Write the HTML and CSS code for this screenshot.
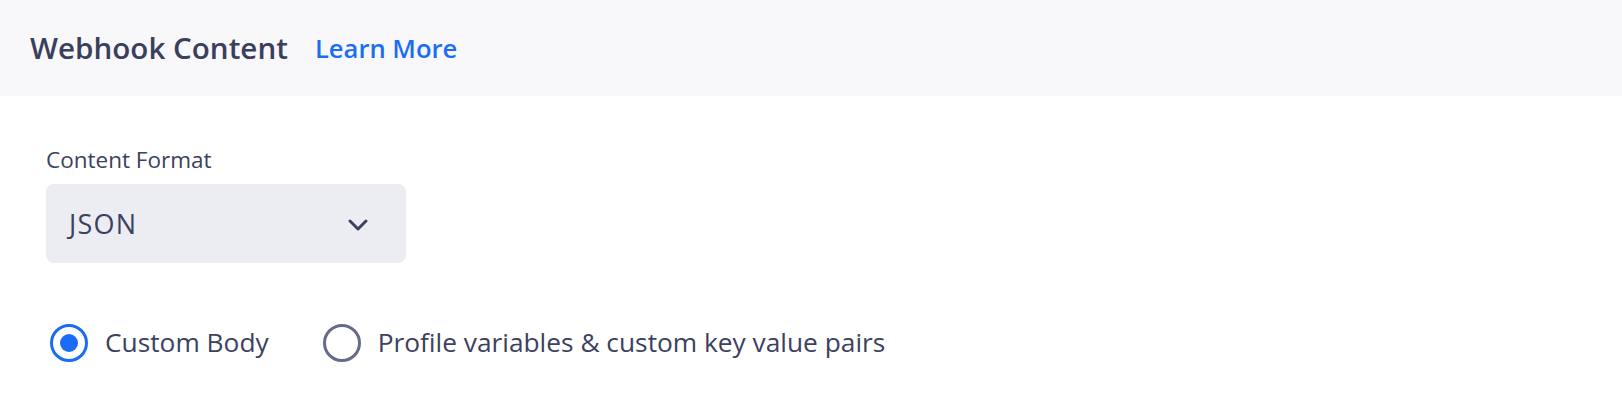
FILE: index.html
```html
<!DOCTYPE html>
<html lang="en">
<head>
<meta charset="utf-8">
<title>Webhook Content</title>
<link rel="stylesheet" href="styles.css">
</head>
<body>
  <header class="panel-header">
    <h2 class="panel-title">Webhook Content</h2>
    <a class="learn-more" href="#">Learn More</a>
  </header>
  <main class="panel-body">
    <label class="field-label">Content Format</label>
    <div class="select">
      <span class="select-value">JSON</span>
      <svg class="chevron" width="20" height="13" viewBox="0 0 20 13" aria-hidden="true">
        <path d="M2 2 L10 10 L18 2" fill="none" stroke="#3c4160" stroke-width="3" stroke-linecap="round" stroke-linejoin="round"/>
      </svg>
    </div>
    <div class="radio-group">
      <label class="radio-option">
        <span class="radio checked"><span class="radio-dot"></span></span>
        <span class="radio-text">Custom Body</span>
      </label>
      <label class="radio-option">
        <span class="radio"></span>
        <span class="radio-text">Profile variables &amp; custom key value pairs</span>
      </label>
    </div>
  </main>
</body>
</html>
```
FILE: styles.css
```css
html, body {
  margin: 0;
  padding: 0;
  background: #ffffff;
}

body {
  width: 1622px;
  height: 410px;
  font-family: "Open Sans", "Liberation Sans", sans-serif;
  color: #3c4160;
  overflow: hidden;
}

.panel-header {
  height: 96px;
  box-sizing: border-box;
  background: #f8f8fa;
  display: flex;
  align-items: center;
  padding-left: 30px;
  gap: 27px;
}

.panel-title {
  margin: 0;
  font-size: 29.6px;
  font-weight: 600;
  color: #3a3f5c;
  line-height: 1;
}

.learn-more {
  font-size: 25.6px;
  font-weight: 600;
  color: #1b6ef3;
  text-decoration: none;
  line-height: 1;
  margin-top: 1px;
}

.panel-body {
  padding-left: 46px;
  padding-top: 49px;
  display: flex;
  flex-direction: column;
  align-items: flex-start;
}

.field-label {
  font-size: 22.5px;
  line-height: 30px;
  color: #3c4160;
}

.select {
  margin-top: 9px;
  width: 360px;
  height: 79px;
  box-sizing: border-box;
  background: #ecedf2;
  border-radius: 8px;
  display: flex;
  align-items: center;
  justify-content: space-between;
  padding-left: 23px;
  padding-right: 38px;
}

.select-value {
  font-size: 27px;
  letter-spacing: 1.2px;
  color: #3c4160;
}

.chevron {
  display: block;
  margin-top: 4px;
}

.radio-group {
  margin-top: 61px;
  display: flex;
  align-items: center;
  gap: 54px;
  padding-left: 4px;
}

.radio-option {
  display: flex;
  align-items: center;
  gap: 17px;
}

.radio {
  width: 38px;
  height: 38px;
  box-sizing: border-box;
  border-radius: 50%;
  border: 3px solid #666b8e;
  display: flex;
  align-items: center;
  justify-content: center;
}

.radio.checked {
  border: 3.5px solid #1a6cf5;
}

.radio-dot {
  width: 18px;
  height: 18px;
  border-radius: 50%;
  background: #1a6cf5;
}

.radio-text {
  font-size: 26.3px;
  color: #3c4160;
  margin-top: -2px;
}
```
